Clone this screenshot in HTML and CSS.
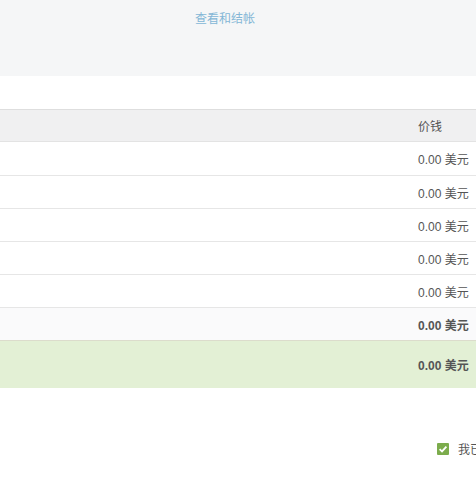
FILE: index.html
```html
<!DOCTYPE html>
<html lang="zh">
<head>
<meta charset="utf-8">
<link rel="stylesheet" href="styles.css">
</head>
<body>
<div class="page">
  <div class="top">
    <a class="checkout-link" href="#">查看和结帐</a>
  </div>
  <div class="table">
    <div class="row head"><div class="c1"></div><div class="c2">价钱</div></div>
    <div class="row"><div class="c1"></div><div class="c2">0.00 美元</div></div>
    <div class="row"><div class="c1"></div><div class="c2">0.00 美元</div></div>
    <div class="row"><div class="c1"></div><div class="c2">0.00 美元</div></div>
    <div class="row"><div class="c1"></div><div class="c2">0.00 美元</div></div>
    <div class="row"><div class="c1"></div><div class="c2">0.00 美元</div></div>
    <div class="row sub"><div class="c1"></div><div class="c2">0.00 美元</div></div>
    <div class="row total"><div class="c1"></div><div class="c2">0.00 美元</div></div>
  </div>
  <div class="agree">
    <span class="check"><svg width="12" height="12" viewBox="0 0 12 12"><rect width="12" height="12" rx="1" fill="#7cac4c"/><path d="M2.6 6.2 L5 8.4 L9.4 3.6" stroke="#fff" stroke-width="1.8" fill="none"/></svg></span>
    <span class="agree-text">我已阅读并同意服务条款</span>
  </div>
</div>
</body>
</html>
```
FILE: styles.css
```css
html, body {
  margin: 0;
  padding: 0;
  background: #fff;
  overflow: hidden;
}
.page {
  width: 476px;
  height: 477px;
  overflow: hidden;
  font-family: "Liberation Sans", "Noto Sans CJK SC", sans-serif;
  font-size: 12px;
  color: #555;
}
.top {
  height: 76px;
  background: #f5f6f7;
  padding-left: 195px;
  box-sizing: border-box;
  padding-top: 11px;
}
.checkout-link {
  color: #84b6d6;
  text-decoration: none;
  font-size: 12px;
  line-height: 16px;
}
.table {
  margin-top: 33px;
}
.row {
  display: flex;
  height: 33px;
  box-sizing: border-box;
  border-top: 1px solid #e6e6e6;
  align-items: center;
}
.c1 { flex: 1; }
.c2 {
  width: 58px;
  white-space: nowrap;
}
.head {
  background: #f0f0f1;
  border-top: 1px solid #dedede;
  border-bottom: 1px solid #e3e3e3;
  height: 33px;
}
.head + .row { border-top: none; height: 33px; }
.sub {
  background: #fafafb;
}
.sub .c2 { font-weight: bold; }
.total {
  background: #e3f0d5;
  height: 48px;
  border-top: 1px solid #dcdccc;
}
.total .c2 { font-weight: bold; }
.agree {
  display: flex;
  align-items: center;
  padding-left: 437px;
  margin-top: 52px;
  white-space: nowrap;
  gap: 9px;
  overflow: hidden;
}
.check { display: flex; flex: none; }
.check svg { display: block; }
.agree-text { color: #555; font-size: 12px; }
```
